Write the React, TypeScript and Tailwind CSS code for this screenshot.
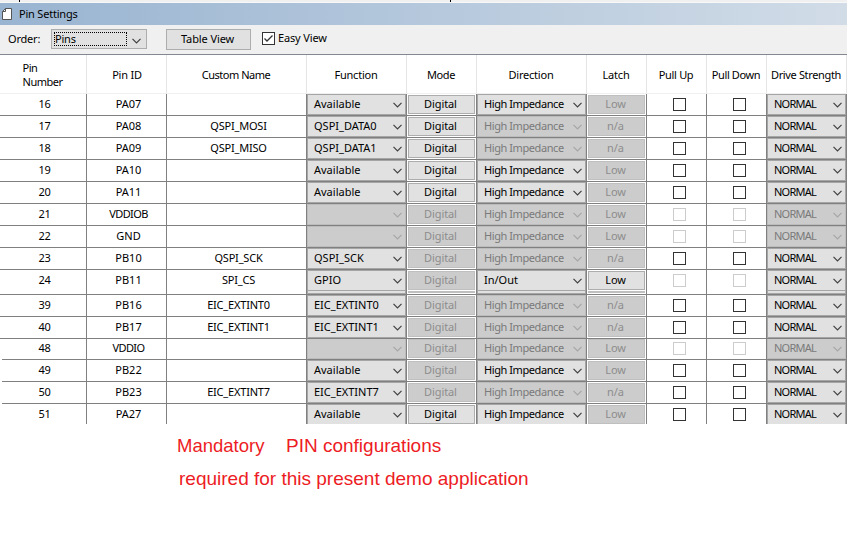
import React from "react";

type Row = [string, string, string, string, string, string, string];

// number, pin, custom name, function, mode/direction/latch enabled flags, direction, latch
const rows: Row[] = [
  ["16", "PA07", "", "Available", "110", "High Impedance", "Low"],
  ["17", "PA08", "QSPI_MOSI", "QSPI_DATA0", "100", "High Impedance", "n/a"],
  ["18", "PA09", "QSPI_MISO", "QSPI_DATA1", "100", "High Impedance", "n/a"],
  ["19", "PA10", "", "Available", "110", "High Impedance", "Low"],
  ["20", "PA11", "", "Available", "110", "High Impedance", "Low"],
  ["21", "VDDIOB", "", "", "000", "High Impedance", "Low"],
  ["22", "GND", "", "", "000", "High Impedance", "Low"],
  ["23", "PB10", "QSPI_SCK", "QSPI_SCK", "000", "High Impedance", "n/a"],
  ["24", "PB11", "SPI_CS", "GPIO", "011", "In/Out", "Low"],
  ["39", "PB16", "EIC_EXTINT0", "EIC_EXTINT0", "000", "High Impedance", "n/a"],
  ["40", "PB17", "EIC_EXTINT1", "EIC_EXTINT1", "000", "High Impedance", "n/a"],
  ["48", "VDDIO", "", "", "000", "High Impedance", "Low"],
  ["49", "PB22", "", "Available", "010", "High Impedance", "Low"],
  ["50", "PB23", "EIC_EXTINT7", "EIC_EXTINT7", "000", "High Impedance", "n/a"],
  ["51", "PA27", "", "Available", "110", "High Impedance", "Low"],
];

const headers: [string, string][] = [
  ["Pin|Number", "pr-px tracking-[-0.5px]"],
  ["Pin ID", "pl-px tracking-[-0.2px]"],
  ["Custom Name", "pr-px tracking-[-0.5px]"],
  ["Function", "pr-px tracking-[-0.2px]"],
  ["Mode", "pr-px tracking-[-0.4px]"],
  ["Direction", "pr-px tracking-[-0.2px]"],
  ["Latch", "pr-px tracking-[-0.2px]"],
  ["Pull Up", "pr-px tracking-[-0.3px]"],
  ["Pull Down", "pr-px tracking-[-0.4px]"],
  ["Drive Strength", "pr-px tracking-[-0.35px]"],
];

const cols = "grid grid-cols-[87px_80px_140px_100px_70px_110px_60px_60px_60px_80px]";

function Chevron({ on }: { on: boolean }) {
  return (
    <svg width="9" height="6" viewBox="0 0 9 6" fill="none" stroke={on ? "#404040" : "#a6a6a6"} strokeWidth="1.2" className="shrink-0">
      <path d="M0.5 0.8 L4.5 4.8 L8.5 0.8" />
    </svg>
  );
}

function fit(text: string) {
  if (text === "High Impedance") return "tracking-[-0.42px]";
  if (text === "NORMAL") return "tracking-[-0.75px]";
  return "tracking-[0px]";
}

function Combo({ text, on }: { text: string; on: boolean }) {
  return (
    <div className={`flex h-[21px] items-start justify-between border pl-[6px] pr-[3px] ${on ? "border-[#a5a5a5] bg-[#e1e1e1] text-black" : "border-[#bcbcbc] bg-[#cccccc] text-[#7a7a7a]"}`}>
      <span className={`mt-[2px] leading-[14px] ${fit(text)}`}>{text}</span>
      <span className="mt-[7px] flex"><Chevron on={on} /></span>
    </div>
  );
}

function Push({ text, on }: { text: string; on: boolean }) {
  return (
    <div className={`m-px h-[19px] border pr-[2px] text-center leading-[15px] tracking-[-0.1px] ${on ? "border-[#adadad] bg-[#e1e1e1] text-black" : "border-[#bfbfbf] bg-[#cccccc] text-[#8c8c8c]"}`}>{text}</div>
  );
}

function Box({ on }: { on: boolean }) {
  return (
    <div className="flex justify-center pt-[4px] pl-[6px]">
      <div className={`h-[13px] w-[13px] border bg-white ${on ? "border-[#333]" : "border-[#ccc]"}`} />
    </div>
  );
}

// Sliver of the next hidden row's control, seen under the taller row 24.
function ComboEdge() {
  return <div className="h-[3px] border-x border-b border-[#a5a5a5] bg-[#e1e1e1]" />;
}
function PushEdge() {
  return <div className="mx-px h-[2px] bg-[#bfbfbf]" />;
}

export default function App() {
  return (
    <div className="h-[552px] w-[847px] overflow-hidden bg-white font-['Noto_Sans',sans-serif] text-[11px] whitespace-nowrap text-black">
      <div className="flex h-[3px] border-b border-[#f8f8f8] bg-[#f0f0f0]">
        <div className="ml-[19px] w-px bg-black" />
        <div className="ml-[430px] w-px bg-black" />
      </div>
      <div className="flex h-[22px] items-center bg-linear-to-r from-[#99b4d1] to-[#d1dce7] pl-[2px]">
        <svg width="11" height="14" viewBox="0 0 11 14" fill="white" stroke="#555" className="mr-[6px]">
          <path d="M3.5 1.5 H9.5 V12.5 H0.5 V4.5 Z M3.5 1.5 V4.5 H0.5" />
        </svg>
        <span className="tracking-[-0.2px]">Pin Settings</span>
      </div>
      <div className="flex h-[30px] items-start border-b border-[#828790] bg-[#f0f0f0] pl-[8px]">
        <span className="mt-[6px] w-[43px] leading-[16px] tracking-[-0.2px]">Order:</span>
        <div className="mt-[4px] flex h-5 w-24 items-center justify-between border border-[#adadad] bg-[#e1e1e1] pr-[5px] pl-[2px]">
          <div className="h-[14px] w-[73px] border border-dotted border-black leading-[12px] tracking-[-0.2px]">Pins</div>
          <span className="mt-[3px] flex"><Chevron on /></span>
        </div>
        <div className="mt-[4px] ml-[19px] h-[21px] w-[85px] border border-[#adadad] bg-[#e1e1e1] pr-[2px] text-center leading-[18px] tracking-[-0.1px]">Table View</div>
        <div className="mt-[7px] ml-[11px] h-[13px] w-[13px] border border-[#333] bg-white">
          <svg width="11" height="11" viewBox="0 0 11 11" fill="none" stroke="#333" strokeWidth="1.3"><path d="M1.5 5.5 L4 8 L9.5 2.5" /></svg>
        </div>
        <span className="mt-[5px] ml-[3px] leading-[16px] tracking-[-0.15px]">Easy View</span>
      </div>
      <div className={`${cols} h-[39px] border-b border-[#f0f0f0]`}>
        {headers.map(([h, style]) => (
          <div key={h} className="flex items-center justify-center border-r border-[#e5e5e5] pt-px leading-[14px]">
            <div className={style}>{h.split("|").map((l) => <div key={l}>{l}</div>)}</div>
          </div>
        ))}
      </div>
      <div className="h-[330px] overflow-hidden">
        {rows.map(([num, pin, name, fn, en, dir, latch]) => {
          const tall = num === "24";
          const free = fn !== "" && !tall;
          const line = num === "51" ? "" : "border-b";
          const cell = `overflow-hidden border-r border-[#808080] ${line}`;
          const lift = num === "48" ? "-mt-px" : "";
          const inset = Number(num) >= 48;
          return (
            <div key={num} className={`${cols} ${tall ? "h-[25px]" : num === "48" ? "h-[21px]" : num === "51" ? "h-[20px]" : "h-[22px]"}`}>
              <div className={`${cell} ${inset ? "ml-[2px] pl-px" : "pl-[3px]"}`}><div className={lift}><div className="pt-[3px] text-center leading-[14px] tracking-[-0.2px]">{num}</div></div></div>
              <div className={`${cell} pl-[4px]`}><div className={lift}><div className={`pt-[3px] text-center leading-[14px] ${pin.startsWith("VDD") ? "tracking-[-0.6px]" : "tracking-[0px]"}`}>{pin}</div></div></div>
              <div className={`${cell} pl-[4px]`}><div className="pt-[3px] text-center leading-[14px] tracking-[-0.2px]">{name}</div></div>
              <div className={cell}><div className={lift}><Combo text={fn} on={fn !== ""} />{tall && <ComboEdge />}</div></div>
              <div className={cell}><div className={`flow-root ${lift}`}><Push text="Digital" on={en[0] === "1"} />{tall && <PushEdge />}</div></div>
              <div className={cell}><div className={lift}><Combo text={dir} on={en[1] === "1"} />{tall && <ComboEdge />}</div></div>
              <div className={cell}><div className={`flow-root ${lift}`}><Push text={latch} on={en[2] === "1"} />{tall && <PushEdge />}</div></div>
              <div className={cell}><div className={lift}><Box on={free} /></div></div>
              <div className={cell}><div className={lift}><Box on={free} /></div></div>
              <div className={cell}><div className={lift}><Combo text="NORMAL" on={fn !== ""} />{tall && <ComboEdge />}</div></div>
            </div>
          );
        })}
      </div>
      <div className="pt-[10px] pl-[177px] font-['Liberation_Sans',sans-serif] text-[19px] text-[#ed1c24]">
        <div className="flex h-[33px] leading-[24px]">
          <span className="w-[109px] text-[18.5px]">Mandatory</span>
          <span>PIN configurations</span>
        </div>
        <div className="pl-[2px] leading-[24px]">required for this present demo application</div>
      </div>
    </div>
  );
}
